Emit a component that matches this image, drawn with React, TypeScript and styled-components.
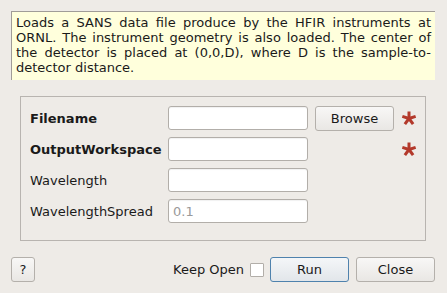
import styled, { createGlobalStyle } from "styled-components";

const GlobalStyle = createGlobalStyle`
  html, body {
    margin: 0;
    padding: 0;
    background: #eeebe7;
  }
  body {
    font-family: "DejaVu Sans", "Liberation Sans", sans-serif;
    font-size: 13px;
    color: #1a1a1a;
  }
`;

const Dialog = styled.div`
  width: 447px;
  height: 293px;
  box-sizing: border-box;
  padding: 11px 12px 0 11px;
  display: flex;
  flex-direction: column;
`;

const Description = styled.div`
  height: 69px;
  box-sizing: border-box;
  background: #ffffdc;
  border-top: 1px solid #a09c98;
  border-left: 1px solid #a09c98;
  padding: 3px 4px 0 4px;
  line-height: 15px;
  text-align: justify;
`;

const GroupBox = styled.div`
  margin: 16px 9px 0 9px;
  height: 145px;
  box-sizing: border-box;
  border: 1px solid #b8b4b0;
  padding: 9px 0 0 9px;
  display: flex;
  flex-direction: column;
  gap: 7px;
`;

const Row = styled.div`
  display: flex;
  align-items: center;
  height: 24px;
`;

const Label = styled.div<{ $bold?: boolean }>`
  width: 138px;
  font-weight: ${(p) => (p.$bold ? "bold" : "normal")};
  white-space: nowrap;
`;

const Input = styled.input`
  width: 140px;
  height: 24px;
  box-sizing: border-box;
  border: 1px solid #b2aea9;
  border-radius: 3px;
  background: #fff;
  box-shadow: inset 0 1px 1px rgba(0, 0, 0, 0.06);
  padding: 0 4px;
  font-family: inherit;
  font-size: 13px;
  outline: none;
  &::placeholder {
    color: #9a9a9a;
  }
`;

const Button = styled.button<{ $primary?: boolean; $width?: number }>`
  width: ${(p) => p.$width ?? 79}px;
  height: 25px;
  box-sizing: border-box;
  border: 1px solid ${(p) => (p.$primary ? "#4f82ad" : "#b4b0ab")};
  border-radius: 3px;
  background: ${(p) =>
    p.$primary
      ? "linear-gradient(#f4f6f8, #e2e6ea)"
      : "linear-gradient(#f8f7f6, #e9e7e4)"};
  font-family: inherit;
  font-size: 13px;
  color: #1a1a1a;
  padding: 0;
`;

const BrowseButton = styled(Button)`
  margin-left: 7px;
`;

const Required = styled.div<{ $offset?: number }>`
  width: 16px;
  height: 16px;
  margin-left: ${(p) => p.$offset ?? 7}px;
  display: flex;
`;

const Footer = styled.div`
  margin-top: 16px;
  display: flex;
  align-items: center;
`;

const Spacer = styled.div`
  flex: 1;
`;

const KeepOpen = styled.label`
  display: flex;
  align-items: center;
  gap: 6px;
  margin-right: 6px;
`;

const CheckBox = styled.span`
  width: 14px;
  height: 14px;
  box-sizing: border-box;
  border: 1px solid #b2aea9;
  background: #fff;
  border-radius: 1px;
`;

const ButtonGroup = styled.div`
  display: flex;
  gap: 7px;
`;

const Star = () => (
  <svg width="16" height="16" viewBox="0 0 16 16">
    {[-90, -18, 54, 126, 198].map((a) => {
      const r = (a * Math.PI) / 180;
      return (
        <line
          key={a}
          x1="8"
          y1="8.5"
          x2={8 + 7 * Math.cos(r)}
          y2={8.5 + 7 * Math.sin(r)}
          stroke="#b3392b"
          strokeWidth="3"
        />
      );
    })}
  </svg>
);

const App = () => (
  <>
    <GlobalStyle />
    <Dialog>
      <Description>
        Loads a SANS data file produce by the HFIR instruments at ORNL. The
        instrument geometry is also loaded. The center of the detector is
        placed at (0,0,D), where D is the sample-to-detector distance.
      </Description>
      <GroupBox>
        <Row>
          <Label $bold>Filename</Label>
          <Input />
          <BrowseButton>Browse</BrowseButton>
          <Required>
            <Star />
          </Required>
        </Row>
        <Row>
          <Label $bold>OutputWorkspace</Label>
          <Input />
          <Required $offset={93}>
            <Star />
          </Required>
        </Row>
        <Row>
          <Label>Wavelength</Label>
          <Input />
        </Row>
        <Row>
          <Label>WavelengthSpread</Label>
          <Input placeholder="0.1" />
        </Row>
      </GroupBox>
      <Footer>
        <Button $width={24}>?</Button>
        <Spacer />
        <KeepOpen>
          Keep Open
          <CheckBox />
        </KeepOpen>
        <ButtonGroup>
          <Button $primary>Run</Button>
          <Button>Close</Button>
        </ButtonGroup>
      </Footer>
    </Dialog>
  </>
);

export default App;
